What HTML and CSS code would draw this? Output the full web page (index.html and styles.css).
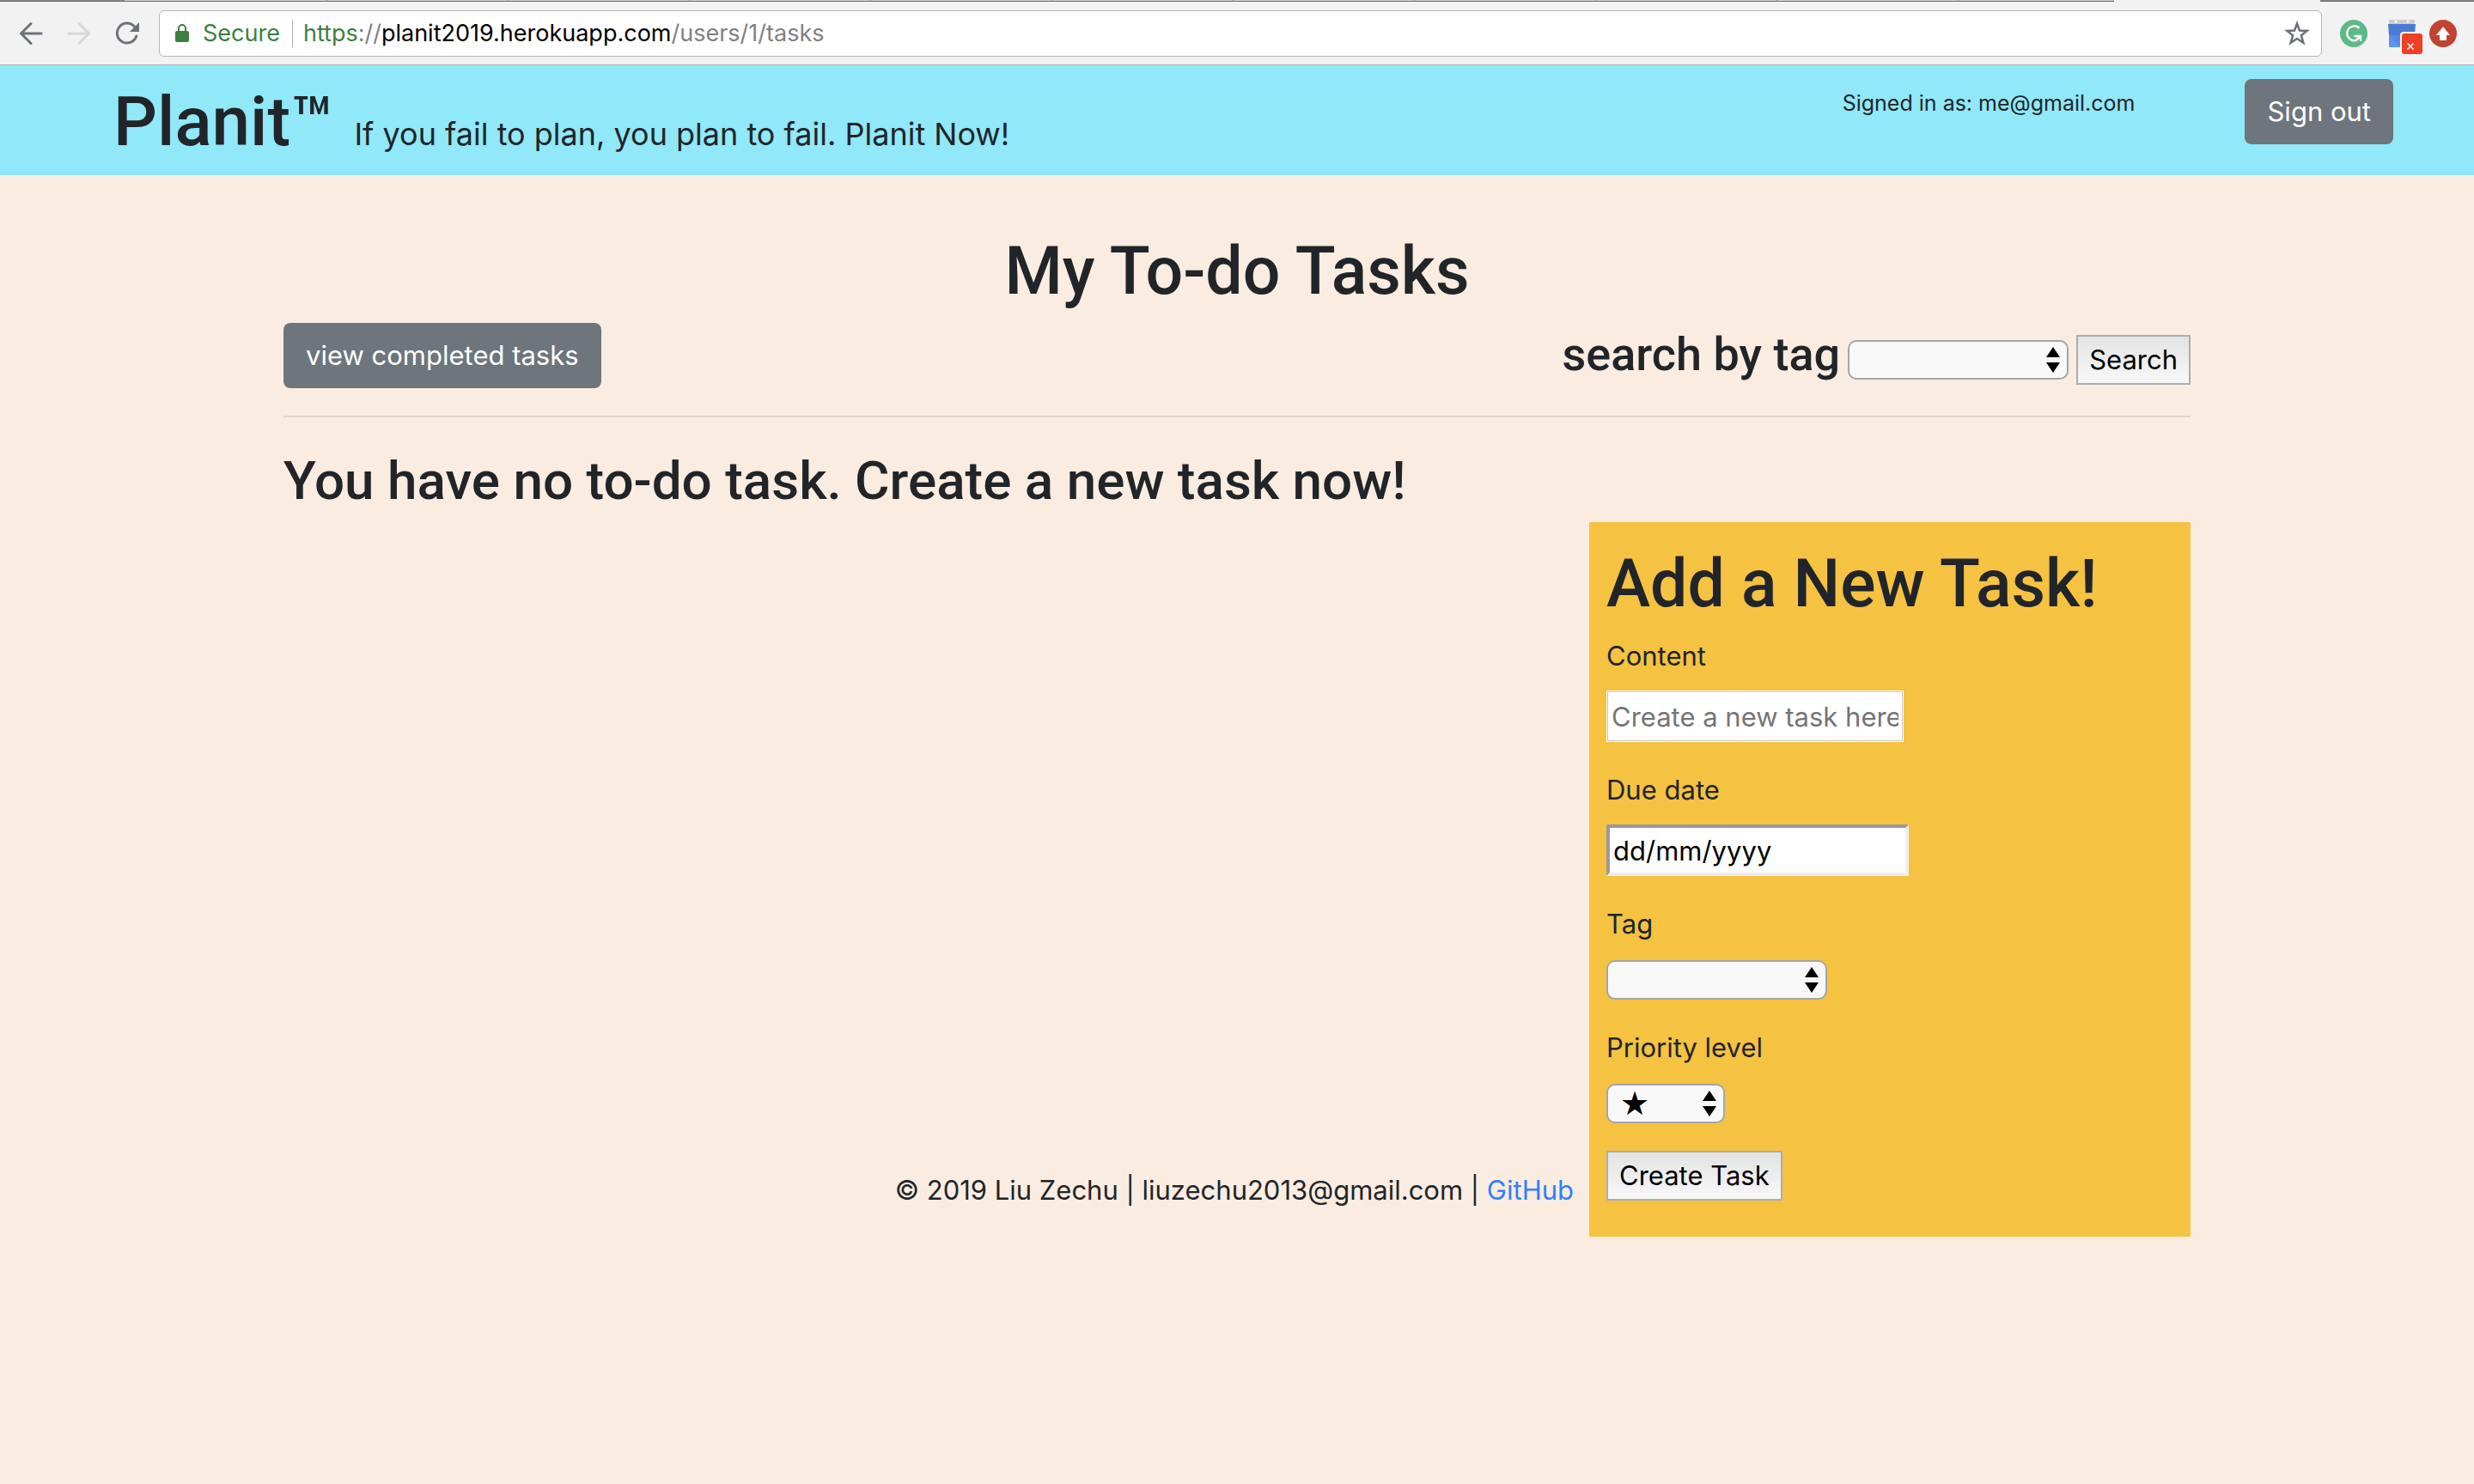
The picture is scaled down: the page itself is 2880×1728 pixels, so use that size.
FILE: index.html
```html
<!DOCTYPE html>
<html lang="en">
<head>
<meta charset="utf-8">
<title>Planit</title>
<link rel="stylesheet" href="styles.css">
</head>
<body>
<div class="browser">
  <div class="tab-strip"><span class="tab-dark"></span><span class="tab tab-first"></span><span class="tab"></span><span class="tab"></span><span class="tab"></span><span class="tab"></span><span class="tab"></span><span class="tab"></span><span class="tab"></span><span class="tab"></span><span class="tab"></span><span class="tab tab-wide"></span><span class="tab-active"></span><span class="tab-dark tab-end"></span></div>
  <div class="toolbar">
    <button class="nav-button" aria-label="Back"><svg width="28" height="28" viewBox="0 0 28 28" fill="none" stroke="#6e7278" stroke-width="3" stroke-linecap="round" stroke-linejoin="round"><path d="M26 14H2.500M14 2.500L2.500 14L14 25.500"/></svg></button>
    <button class="nav-button" aria-label="Forward"><svg width="28" height="28" viewBox="0 0 28 28" fill="none" stroke="#d6d7d8" stroke-width="3" stroke-linecap="round" stroke-linejoin="round"><path d="M2 14H25.500M14 2.500L25.500 14L14 25.500"/></svg></button>
    <button class="nav-button" aria-label="Reload"><svg width="28" height="28" viewBox="0 0 28 28"><path d="M22.500 6A11.500 11.500 0 1 0 24.800 17" fill="none" stroke="#6e7278" stroke-width="3" stroke-linecap="round"/><path d="M28 1V12H17Z" fill="#6e7278"/></svg></button>
    <div class="address">
      <svg class="lock" width="16" height="22" viewBox="0 0 16 22"><rect y="8" width="16" height="13" rx="2" fill="#3c7f3f"/><path d="M4 9V5A4 4 0 0 1 12 5V9" fill="none" stroke="#3c7f3f" stroke-width="2"/></svg>
      <span class="secure">Secure</span>
      <span class="url"><span class="scheme">https</span>://<span class="host">planit2019.herokuapp.com</span>/users/1/tasks</span>
      <button class="nav-button bookmark" aria-label="Bookmark"><svg width="30" height="30" viewBox="0 0 30 30" fill="none" stroke="#6e7278" stroke-width="2.600"><path d="M15 3.500L18 11.600L26.500 12L19.900 17.300L22.300 25.800L15 21L7.700 25.800L10.100 17.300L3.500 12L12 11.600Z"/></svg></button>
    </div>
    <div class="extensions">
      <svg width="32" height="32" viewBox="0 0 32 32"><circle cx="16" cy="16" r="16" fill="#5dba87"/><path d="M22.500 9.500A8.500 8.500 0 1 0 18 24.200" fill="none" stroke="#fff" stroke-width="2.400"/><path d="M16.500 19H24V25M24 19L18 24.500" fill="none" stroke="#fff" stroke-width="2.400"/></svg>
      <svg width="40" height="40" viewBox="0 0 40 40"><path d="M1 0H31V5H1Z" fill="#cbcccb"/><circle cx="9" cy="2" r="1.500" fill="#fff"/><circle cx="23" cy="2" r="1.500" fill="#fff"/><path d="M0 5H32L31 18V32H1V18Z" fill="#4c7bd5"/><path d="M1 18H31V32H1Z" fill="#5b95ee"/><path d="M1 18L15 32H31V18Z" fill="#548ae6"/><rect x="14" y="14" width="28" height="28" rx="4" fill="#f2f2f2"/><rect x="16" y="16" width="24" height="24" rx="3" fill="#ee4024"/><path d="M22.500 27.500L29.500 34.500M29.500 27.500L22.500 34.500" stroke="#fff" stroke-width="1.600"/></svg>
      <svg width="32" height="32" viewBox="0 0 32 32"><circle cx="16" cy="16" r="16" fill="#c14333"/><path d="M16 8L24 18H20V24H12V18H8Z" fill="#fff"/></svg>
    </div>
  </div>
</div>

<header class="site-header">
  <span class="brand">Planit™</span>
  <span class="tagline">If you fail to plan, you plan to fail. Planit Now!</span>
  <span class="signed-in">Signed in as: me@gmail.com</span>
  <button class="btn">Sign out</button>
</header>

<main class="container">
  <h1 class="page-title">My To-do Tasks</h1>
  <div class="actions">
    <button class="btn">view completed tasks</button>
    <form class="search">
      <label class="search-label" for="search-tag">search by tag</label>
      <select class="select" id="search-tag"><option></option></select>
      <button class="plain-button" type="button">Search</button>
    </form>
  </div>
  <h2 class="empty">You have no to-do task. Create a new task now!</h2>
  <div class="lower">
    <footer class="footer">© 2019 Liu Zechu | liuzechu2013@gmail.com | <a href="#">GitHub</a></footer>
    <form class="card">
      <h1 class="card-title">Add a New Task!</h1>
      <div class="field">
        <label for="content">Content</label>
        <input class="text-input" id="content" type="text" placeholder="Create a new task here">
      </div>
      <div class="field">
        <label for="due">Due date</label>
        <input class="text-input date-input" id="due" type="text" placeholder="dd/mm/yyyy">
      </div>
      <div class="field">
        <label for="tag">Tag</label>
        <select class="select" id="tag"><option></option></select>
      </div>
      <div class="field">
        <label for="priority">Priority level</label>
        <select class="select select-small" id="priority"><option>★</option></select>
      </div>
      <button class="plain-button" type="button">Create Task</button>
    </form>
  </div>
</main>
</body>
</html>
```
FILE: styles.css
```css
* { box-sizing: border-box; }

body {
  margin: 0;
  background: #fbece1;
  color: #212529;
  font: 31px/48px Inter, "Liberation Sans", sans-serif;
}

h1, h2 { margin: 0; }
h1, h2, .brand, .search-label { font-family: Roboto, "Liberation Sans", sans-serif; font-weight: 500; }
button, input, select { font: inherit; }

/* Browser bar */
.browser { background: #f2f2f2; border-bottom: 1px solid #b5b5b5; }
.tab-strip { display: flex; height: 2px; }
.tab-dark { width: 145px; background: #8b8b8b; border-bottom: 1px solid #666; }
.tab { width: 211px; background: #d2d4d2; border-bottom: 1px solid #666; border-right: 1px solid #999; }
.tab-first { width: 236px; }
.tab-wide { flex: 1; }
.tab-active { width: 240px; }
.tab-end { width: 179px; }
.toolbar { display: flex; align-items: center; height: 73px; padding: 0 20px 0 22px; }
.nav-button { display: flex; padding: 0; border: 0; background: none; margin-right: 28px; }
.nav-button + .address { margin-left: -5px; }
.address {
  flex: 1;
  display: flex;
  align-items: center;
  height: 54px;
  padding: 0 13px 0 18px;
  border: 1px solid #b5b5b5;
  border-radius: 6px;
  background: #fff;
  font-size: 27px;
  line-height: 32px;
}
.secure { margin-left: 16px; padding-right: 14px; border-right: 1px solid #aaa; color: #3c7f3f; }
.url { flex: 1; margin-left: 12px; color: #808080; }
.scheme { color: #3c7f3f; }
.host { color: #000; }
.bookmark { margin: 0; }
.extensions { display: flex; align-items: flex-start; gap: 24px; height: 32px; margin-left: 21px; }
.extensions svg:nth-child(2) { margin-right: -16px; }

/* Page header */
.site-header {
  display: flex;
  align-items: baseline;
  height: 128px;
  padding: 16px 94px 0 132px;
  background: #90e8f8;
}
.brand { font-size: 80px; line-height: 100px; }
.tagline { flex: 1; margin-left: 24px; font-size: 36px; }
.signed-in { align-self: flex-start; margin-right: 128px; font-size: 25px; line-height: 56px; }
.btn {
  align-self: flex-start;
  height: 76px;
  padding: 0 26px;
  border: 0;
  border-radius: 8px;
  background: #6e757c;
  color: #fff;
}

/* Task page */
.container { max-width: 2280px; margin: 0 auto; padding: 64px 30px 0; }
.page-title { font-size: 77px; line-height: 96px; text-align: center; }
.actions {
  display: flex;
  justify-content: space-between;
  margin-top: 12px;
  padding-bottom: 32px;
  border-bottom: 2px solid #e3d5cb;
}
.search { display: flex; align-items: center; gap: 9px; padding-top: 10px; height: 76px; }
.search-label { font-size: 54px; line-height: 56px; padding-bottom: 12px; }
.select {
  appearance: none;
  display: block;
  width: 257px;
  height: 46px;
  padding: 0 14px;
  border: 2px solid #a5a5a5;
  border-radius: 10px;
  background: #f8f8f8 url("data:image/svg+xml,%3Csvg xmlns='http://www.w3.org/2000/svg' width='16' height='30'%3E%3Cpath d='M0 12L8 0L16 12ZM0 18H16L8 30Z'/%3E%3C/svg%3E") no-repeat right 8px center;
  color: #000;
  line-height: 40px;
}
.select-small { width: 138px; font-family: "DejaVu Sans", sans-serif; font-size: 38px; }
.plain-button {
  height: 58px;
  padding: 0 13px;
  border: 2px solid #adadad;
  background: linear-gradient(#e3e3e3, #f8f8f8);
  color: #000;
}
.empty { margin-top: 34px; font-size: 62px; line-height: 80px; }
.lower { display: grid; grid-template-columns: 1fr 700px; column-gap: 18px; margin-top: 8px; }
.footer { align-self: end; justify-self: end; padding-bottom: 30px; }
.footer a { color: #2f80ff; text-decoration: none; }

.card { padding: 24px 20px 42px; background: #f5c242; }
.card-title { font-size: 77px; line-height: 96px; margin-bottom: 12px; }
.field { margin-bottom: 34px; }
.field:last-of-type { margin-bottom: 32px; }
.field label { display: block; margin-bottom: 16px; }
.field .select { margin-top: 18px; }
.field { margin-bottom: 32px; }
.text-input {
  display: block;
  width: 346px;
  height: 60px;
  padding: 0 4px;
  border: 2px solid #c4c4c4;
  outline: 1px solid #fff;
  outline-offset: -1px;
  background: #fff;
  color: #000;
}
.text-input::placeholder { color: #757575; opacity: 1; }
.date-input { width: 352px; border: 4px inset #eee; outline: 0; }
.date-input::placeholder { color: #000; }
```
